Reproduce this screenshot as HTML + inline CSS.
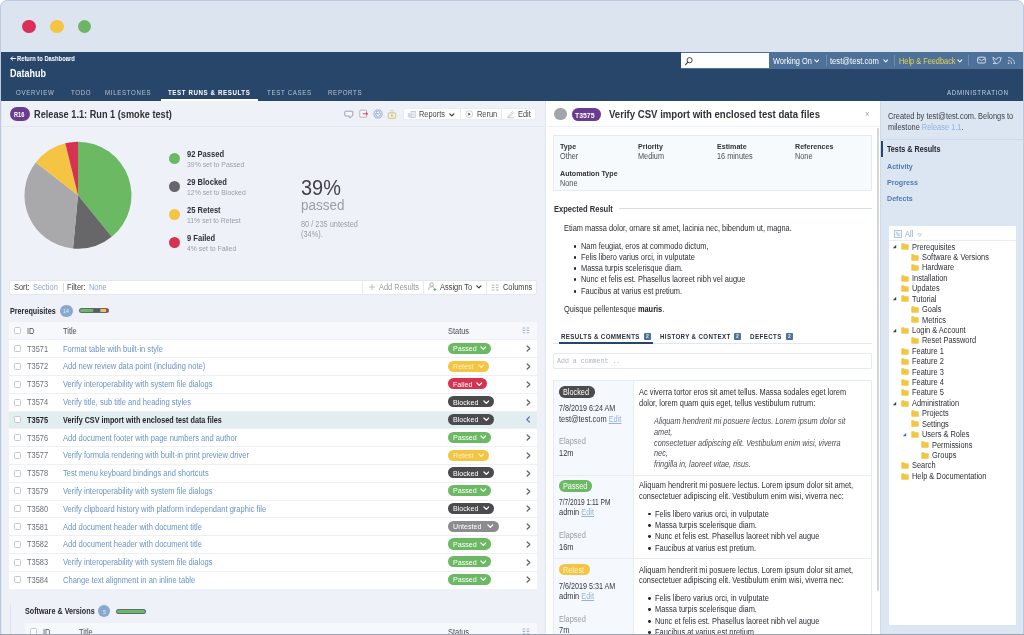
<!DOCTYPE html>
<html lang="en"><head><meta charset="utf-8"><title>Datahub - Test Runs &amp; Results</title>
<style>
html,body{margin:0;padding:0;background:#fff;}
body{width:1024px;height:635px;position:relative;overflow:hidden;will-change:transform;font-family:"Liberation Sans",sans-serif;}
.b{position:absolute;display:block;}
.t{position:absolute;display:block;white-space:nowrap;line-height:1;transform:scaleX(0.88);transform-origin:0 50%;}
</style></head>
<body>
<div class="b" style="left:0.0px;top:0.0px;width:1024.0px;height:635.0px;background:#fff;"></div>
<div class="b" style="left:0.0px;top:0.0px;width:1024.0px;height:640.0px;background:#dce4f0;border:1.4px solid #bdcadd;border-radius:7px 7px 0 0;box-sizing:border-box;"></div>
<div class="b" style="left:22.2px;top:19.6px;width:13.6px;height:13.6px;background:#d9305a;border-radius:50%;"></div>
<div class="b" style="left:50.2px;top:19.6px;width:13.6px;height:13.6px;background:#f5c443;border-radius:50%;"></div>
<div class="b" style="left:77.7px;top:19.6px;width:13.6px;height:13.6px;background:#6db564;border-radius:50%;"></div>
<div class="b" style="left:1.4px;top:52.0px;width:1021.2px;height:49.1px;background:#28466a;"></div>
<div class="b" style="left:680.5px;top:52.0px;width:342.0px;height:17.0px;background:#4d7198;"></div>
<div class="b" style="left:681.0px;top:53.0px;width:87.5px;height:15.0px;background:#fff;"></div>
<svg class="b" style="left:684px;top:55.5px" width="10" height="10" viewBox="0 0 10 10"><circle cx="5.6" cy="4.2" r="2.6" fill="none" stroke="#444" stroke-width="1"/><path d="M3.8 6.2 L1.6 8.6" stroke="#444" stroke-width="1.2" stroke-linecap="round"/></svg>
<svg class="b" style="left:9.6px;top:56.4px" width="6" height="5" viewBox="0 0 6 5"><path d="M5.4 2.5 H1 M2.7 0.7 L0.9 2.5 L2.7 4.3" fill="none" stroke="#fff" stroke-width="1" stroke-linecap="round" stroke-linejoin="round"/></svg>
<span class="t" style="left:17.0px;top:56px;font-size:6.6px;color:#fff;font-weight:700;">Return to Dashboard</span>
<span class="t" style="left:10.0px;top:69px;font-size:10.2px;color:#fff;font-weight:700;">Datahub</span>
<span class="t" style="left:15.7px;top:89px;font-size:7px;color:#b5c3d4;letter-spacing:0.75px;">OVERVIEW</span>
<span class="t" style="left:70.5px;top:89px;font-size:7px;color:#b5c3d4;letter-spacing:0.75px;">TODO</span>
<span class="t" style="left:105.3px;top:89px;font-size:7px;color:#b5c3d4;letter-spacing:0.75px;">MILESTONES</span>
<span class="t" style="left:167.5px;top:89px;font-size:7px;color:#fff;font-weight:700;letter-spacing:0.68px;">TEST RUNS &amp; RESULTS</span>
<span class="t" style="left:267.0px;top:89px;font-size:7px;color:#b5c3d4;letter-spacing:0.75px;">TEST CASES</span>
<span class="t" style="left:327.5px;top:89px;font-size:7px;color:#b5c3d4;letter-spacing:0.75px;">REPORTS</span>
<div class="b" style="left:160.8px;top:99.3px;width:97.2px;height:1.8px;background:#fff;"></div>
<span class="t" style="left:947.0px;top:89px;font-size:7px;color:#c5d1e0;letter-spacing:0.75px;">ADMINISTRATION</span>
<span class="t" style="left:773.0px;top:57px;font-size:8.4px;color:#fff;">Working On</span>
<span class="t" style="left:830.0px;top:57px;font-size:8.4px;color:#fff;transform:scaleX(0.91);">test@test.com</span>
<span class="t" style="left:899.0px;top:57px;font-size:8.4px;color:#e8d44f;">Help &amp; Feedback</span>
<svg class="b" style="left:813.5px;top:59px" width="5.6000000000000005" height="4.0" viewBox="0 0 7 5"><path d="M1 1 L3.5 3.6 L6 1" fill="none" stroke="#fff" stroke-width="1.3" stroke-linecap="round" stroke-linejoin="round"/></svg>
<svg class="b" style="left:882.5px;top:59px" width="5.6000000000000005" height="4.0" viewBox="0 0 7 5"><path d="M1 1 L3.5 3.6 L6 1" fill="none" stroke="#fff" stroke-width="1.3" stroke-linecap="round" stroke-linejoin="round"/></svg>
<svg class="b" style="left:957px;top:59px" width="5.6000000000000005" height="4.0" viewBox="0 0 7 5"><path d="M1 1 L3.5 3.6 L6 1" fill="none" stroke="#fff" stroke-width="1.3" stroke-linecap="round" stroke-linejoin="round"/></svg>
<div class="b" style="left:825.5px;top:55.0px;width:0.8px;height:11.0px;background:#6f8cae;"></div>
<div class="b" style="left:893.5px;top:55.0px;width:0.8px;height:11.0px;background:#6f8cae;"></div>
<div class="b" style="left:967.5px;top:55.0px;width:0.8px;height:11.0px;background:#6f8cae;"></div>
<svg class="b" style="left:977px;top:56px" width="9" height="8" viewBox="0 0 9 8"><rect x="0.6" y="1.2" width="7.8" height="5.8" rx="1.2" fill="none" stroke="#d5deea" stroke-width="1"/><path d="M1 2.6 L4.5 4.6 L8 2.6" fill="none" stroke="#d5deea" stroke-width="0.9"/></svg>
<svg class="b" style="left:991.5px;top:55.5px" width="10" height="9" viewBox="0 0 10 9"><path d="M1 1 C2.5 3 4 3.4 5 3.2 C5 1.4 7.4 0.8 8.2 2 L9.4 1.6 L8.6 2.9 C8.8 6 6 8.4 1 7.4 C2.4 7.2 3.2 6.8 3.6 6.2 C2.4 6 1.6 5 1.6 4.4 C1.2 3.4 1 2 1 1 Z" fill="none" stroke="#d5deea" stroke-width="0.9" stroke-linejoin="round"/></svg>
<svg class="b" style="left:1007px;top:56px" width="9" height="9" viewBox="0 0 9 9"><circle cx="1.6" cy="7.2" r="0.9" fill="#b9c7d9"/><path d="M1 4.2 A3.8 3.8 0 0 1 4.8 8" fill="none" stroke="#b9c7d9" stroke-width="1"/><path d="M1 1.4 A6.6 6.6 0 0 1 7.6 8" fill="none" stroke="#b9c7d9" stroke-width="1"/></svg>
<div class="b" style="left:1.4px;top:101.1px;width:544.0px;height:533.9px;background:#eef1f8;"></div>
<div class="b" style="left:1.4px;top:101.1px;width:1.0px;height:533.9px;background:#dde7f5;"></div>
<div class="b" style="left:2.0px;top:126.0px;width:543.5px;height:1.0px;background:#e3e8f1;"></div>
<div class="b" style="left:10.0px;top:107.0px;width:20.0px;height:14.0px;background:#6b3b8e;border-radius:7px;"></div>
<span class="t" style="left:13.6px;top:112px;font-size:6.4px;color:#fff;font-weight:700;">R16</span>
<span class="t" style="left:34.0px;top:109px;font-size:11px;color:#2f3136;font-weight:700;transform:scaleX(0.835);">Release 1.1: Run 1 (smoke test)</span>
<svg class="b" style="left:0;top:0" width="300" height="300" viewBox="0 0 300 300"><path d="M78 195.3 L78.00 141.80 A53.5 53.5 0 0 1 111.71 236.84 Z" fill="#6cb964"/><path d="M78 195.3 L111.71 236.84 A53.5 53.5 0 0 1 73.00 248.57 Z" fill="#676769"/><path d="M78 195.3 L73.00 248.57 A53.5 53.5 0 0 1 35.79 162.42 Z" fill="#a9a9ab"/><path d="M78 195.3 L35.79 162.42 A53.5 53.5 0 0 1 65.25 143.34 Z" fill="#f4c543"/><path d="M78 195.3 L65.25 143.34 A53.5 53.5 0 0 1 78.00 141.80 Z" fill="#d63352"/></svg>
<div class="b" style="left:169.2px;top:152.8px;width:11.2px;height:11.2px;background:#6cb964;border-radius:50%;"></div>
<span class="t" style="left:186.7px;top:150px;font-size:8.6px;color:#2f3136;font-weight:700;">92 Passed</span>
<span class="t" style="left:186.7px;top:161px;font-size:7.8px;color:#9a9ea6;">39% set to Passed</span>
<div class="b" style="left:169.2px;top:180.8px;width:11.2px;height:11.2px;background:#676769;border-radius:50%;"></div>
<span class="t" style="left:186.7px;top:178px;font-size:8.6px;color:#2f3136;font-weight:700;">29 Blocked</span>
<span class="t" style="left:186.7px;top:189px;font-size:7.8px;color:#9a9ea6;">12% set to Blocked</span>
<div class="b" style="left:169.2px;top:208.8px;width:11.2px;height:11.2px;background:#f4c543;border-radius:50%;"></div>
<span class="t" style="left:186.7px;top:206px;font-size:8.6px;color:#2f3136;font-weight:700;">25 Retest</span>
<span class="t" style="left:186.7px;top:217px;font-size:7.8px;color:#9a9ea6;">11% set to Retest</span>
<div class="b" style="left:169.2px;top:236.8px;width:11.2px;height:11.2px;background:#d63352;border-radius:50%;"></div>
<span class="t" style="left:186.7px;top:234px;font-size:8.6px;color:#2f3136;font-weight:700;">9 Failed</span>
<span class="t" style="left:186.7px;top:245px;font-size:7.8px;color:#9a9ea6;">4% set to Failed</span>
<span class="t" style="left:300.5px;top:177px;font-size:22.5px;color:#404247;transform:scaleX(0.885);">39%</span>
<span class="t" style="left:300.5px;top:197px;font-size:15.5px;color:#9b9ea5;transform:scaleX(0.87);">passed</span>
<span class="t" style="left:300.7px;top:220px;font-size:8.4px;color:#9a9ea6;">80 / 235 untested</span>
<span class="t" style="left:300.7px;top:230px;font-size:8.4px;color:#9a9ea6;">(34%).</span>
<svg class="b" style="left:344px;top:109.6px" width="10" height="10" viewBox="0 0 10 10"><path d="M1.4 1.2 H8.2 Q8.8 1.2 8.8 1.8 V5.4 Q8.8 6 8.2 6 H7.4 L6.2 8.2 L5.2 6 H1.4 Q0.8 6 0.8 5.4 V1.8 Q0.8 1.2 1.4 1.2 Z" fill="#f4f6fa" stroke="#8d9aae" stroke-width="0.9" stroke-linejoin="round"/></svg>
<svg class="b" style="left:358.8px;top:109.3px" width="10" height="10" viewBox="0 0 10 10"><rect x="0.8" y="1.2" width="6.8" height="7" rx="0.6" fill="#fdf5f6" stroke="#a3a6b3" stroke-width="0.8"/><path d="M7.6 1.6 V8" stroke="#e6a9b3" stroke-width="0.8"/><path d="M3.6 4.8 H8.4 M7 3.5 L8.5 4.8 L7 6.1" fill="none" stroke="#d63352" stroke-width="0.9"/></svg>
<svg class="b" style="left:372.5px;top:109px" width="10" height="10" viewBox="0 0 10 10"><circle cx="5" cy="5" r="4.1" fill="#dde7f4" stroke="#8ca3c6" stroke-width="0.8"/><rect x="2.6" y="4.2" width="4.8" height="2.4" rx="0.4" fill="#fff" stroke="#8ca3c6" stroke-width="0.6"/><rect x="3.5" y="2.6" width="3" height="1.6" fill="#fff" stroke="#8ca3c6" stroke-width="0.5"/><rect x="3.6" y="5.9" width="2.8" height="1.6" fill="#fff" stroke="#8ca3c6" stroke-width="0.5"/></svg>
<svg class="b" style="left:387.3px;top:109px" width="10" height="10" viewBox="0 0 10 10"><rect x="1.2" y="3.8" width="7.4" height="5.6" rx="0.7" fill="#f5efd6" stroke="#c4b98d" stroke-width="0.8"/><path d="M3.4 3.8 V2.6 A1.5 1.5 0 0 1 6.4 2.6 V3.8" fill="none" stroke="#cfc7a6" stroke-width="0.8"/><rect x="4.3" y="5.4" width="1.3" height="2.2" fill="#bdb083"/></svg>
<div class="b" style="left:402.8px;top:107.8px;width:133.4px;height:12.2px;background:#fff;border:1px solid #e9edf4;border-radius:2px;box-sizing:border-box;"></div>
<div class="b" style="left:460.2px;top:108.5px;width:0.8px;height:11.5px;background:#e6eaf1;"></div>
<div class="b" style="left:501.0px;top:108.5px;width:0.8px;height:11.5px;background:#e6eaf1;"></div>
<svg class="b" style="left:407px;top:110px" width="9" height="9" viewBox="0 0 9 9"><rect x="0.8" y="3" width="3" height="4.6" fill="#d4dae6"/><rect x="4.2" y="1.4" width="4" height="6.2" fill="none" stroke="#b8c0d0" stroke-width="0.8"/><path d="M5 3 H7.4 M5 4.6 H7.4 M5 6 H7.4" stroke="#b8c0d0" stroke-width="0.6"/></svg>
<span class="t" style="left:418.6px;top:110px;font-size:8.45px;color:#45484f;">Reports</span>
<svg class="b" style="left:449.3px;top:112.6px" width="5.739999999999999" height="4.1" viewBox="0 0 7 5"><path d="M1 1 L3.5 3.6 L6 1" fill="none" stroke="#3a3d44" stroke-width="1.5" stroke-linecap="round" stroke-linejoin="round"/></svg>
<svg class="b" style="left:465px;top:110.2px" width="9" height="9" viewBox="0 0 9 9"><circle cx="4.2" cy="4.2" r="3.5" fill="none" stroke="#c3c8d3" stroke-width="0.8"/><path d="M3.3 2.6 L5.8 4.2 L3.3 5.8 Z" fill="#55585f"/></svg>
<span class="t" style="left:477.0px;top:110px;font-size:8.45px;color:#45484f;">Rerun</span>
<svg class="b" style="left:506px;top:110px" width="9" height="9" viewBox="0 0 9 9"><path d="M1.2 7.8 H8" stroke="#b7bcc8" stroke-width="0.8"/><path d="M2.2 6.4 L6.4 1.6 L7.6 2.6 L3.6 7 L2 7.2 Z" fill="none" stroke="#b7bcc8" stroke-width="0.8"/></svg>
<span class="t" style="left:518.3px;top:110px;font-size:8.45px;color:#45484f;">Edit</span>
<div class="b" style="left:9.0px;top:279.5px;width:527.5px;height:15.0px;background:#fff;border:1px solid #e3e8f0;border-radius:2px;box-sizing:border-box;"></div>
<span class="t" style="left:14.3px;top:283px;font-size:8.45px;color:#3b3e45;">Sort:</span>
<span class="t" style="left:32.8px;top:283px;font-size:8.45px;color:#8aa7c9;">Section</span>
<div class="b" style="left:62.5px;top:282.5px;width:0.8px;height:9.5px;background:#d5dae3;"></div>
<span class="t" style="left:67.3px;top:283px;font-size:8.45px;color:#3b3e45;">Filter:</span>
<span class="t" style="left:89.0px;top:283px;font-size:8.45px;color:#8aa7c9;">None</span>
<div class="b" style="left:362.0px;top:280.5px;width:0.8px;height:13.0px;background:#e6eaf1;"></div>
<div class="b" style="left:423.0px;top:280.5px;width:0.8px;height:13.0px;background:#e6eaf1;"></div>
<div class="b" style="left:486.0px;top:280.5px;width:0.8px;height:13.0px;background:#e6eaf1;"></div>
<svg class="b" style="left:368px;top:283px" width="8" height="8" viewBox="0 0 8 8"><path d="M4 1 V7 M1 4 H7" stroke="#b5bac4" stroke-width="0.9"/></svg>
<span class="t" style="left:379.0px;top:283px;font-size:8.45px;color:#9599a1;">Add Results</span>
<svg class="b" style="left:427.5px;top:282.2px" width="9" height="10" viewBox="0 0 9 10"><circle cx="3.6" cy="2.6" r="1.8" fill="none" stroke="#9aa0ab" stroke-width="0.8"/><path d="M0.8 8 V6.6 A2 2 0 0 1 2.8 4.8 H4.4 A2 2 0 0 1 6 5.6" fill="none" stroke="#9aa0ab" stroke-width="0.8"/><path d="M6.8 6 V9 M5.3 7.5 H8.3" stroke="#5aa35a" stroke-width="0.9"/></svg>
<span class="t" style="left:439.5px;top:283px;font-size:8.45px;color:#3b3e45;">Assign To</span>
<svg class="b" style="left:476px;top:285.4px" width="5.739999999999999" height="4.1" viewBox="0 0 7 5"><path d="M1 1 L3.5 3.6 L6 1" fill="none" stroke="#3a3d44" stroke-width="1.5" stroke-linecap="round" stroke-linejoin="round"/></svg>
<svg class="b" style="left:491px;top:283.5px" width="8" height="8" viewBox="0 0 8 8"><path d="M0.6 1.2 H3.4 M0.6 3.6 H3.4 M0.6 6 H3.4 M4.8 1.2 H7.6 M4.8 3.6 H7.6 M4.8 6 H7.6" stroke="#a9aeb9" stroke-width="0.9"/></svg>
<span class="t" style="left:503.0px;top:283px;font-size:8.45px;color:#3b3e45;">Columns</span>
<span class="t" style="left:9.8px;top:308px;font-size:8.2px;color:#26282d;font-weight:700;">Prerequisites</span>
<div class="b" style="left:59.6px;top:305.0px;width:13.8px;height:12.0px;background:#88a8cd;border-radius:6px;"></div>
<span class="t" style="left:63.3px;top:308px;font-size:6px;color:#e9f0f9;">14</span>
<div class="b" style="left:79.3px;top:307.7px;width:29.7px;height:5.6px;background:#5f6a78;border-radius:3px;"></div>
<div class="b" style="left:80.2px;top:308.7px;width:13.3px;height:3.6px;background:#6cb964;border-radius:2px 0 0 2px;"></div>
<div class="b" style="left:93.5px;top:308.7px;width:6.0px;height:3.6px;background:#5a5c60;"></div>
<div class="b" style="left:99.5px;top:308.7px;width:1.8px;height:3.6px;background:#9b9b9d;"></div>
<div class="b" style="left:101.3px;top:308.7px;width:5.0px;height:3.6px;background:#f4c543;"></div>
<div class="b" style="left:106.3px;top:308.7px;width:1.8px;height:3.6px;background:#d63352;border-radius:0 2px 2px 0;"></div>
<div class="b" style="left:9.0px;top:322.1px;width:527.5px;height:16.6px;background:#f6f8fc;"></div>
<div class="b" style="left:14.0px;top:326.8px;width:7.0px;height:7.0px;background:#fff;border:1px solid #c2c7d0;border-radius:1.5px;box-sizing:border-box;"></div>
<span class="t" style="left:27.0px;top:327px;font-size:8.45px;color:#4a4d55;">ID</span>
<span class="t" style="left:63.3px;top:327px;font-size:8.45px;color:#4a4d55;">Title</span>
<span class="t" style="left:448.0px;top:327px;font-size:8.45px;color:#4a4d55;">Status</span>
<svg class="b" style="left:521.5px;top:326.79999999999995px" width="8" height="7" viewBox="0 0 8 7"><path d="M0.6 1 H3.2 M0.6 3.4 H3.2 M0.6 5.8 H3.2 M4.6 1 H7.2 M4.6 3.4 H7.2 M4.6 5.8 H7.2" stroke="#a6b7d0" stroke-width="1.1"/></svg>
<div class="b" style="left:9.0px;top:339.9px;width:527.5px;height:248.9px;background:#fff;"></div>
<div class="b" style="left:14.0px;top:345.2px;width:7.0px;height:7.0px;background:#fff;border:1px solid #c2c7d0;border-radius:1.5px;box-sizing:border-box;"></div>
<span class="t" style="left:27.0px;top:345px;font-size:8.45px;color:#6b6f77;">T3571</span>
<span class="t" style="left:63.0px;top:345px;font-size:8.45px;color:#6a94c6;transform:scaleX(0.895);">Format table with built-in style</span>
<div class="b" style="left:448.0px;top:342.8px;width:43.0px;height:11.2px;background:#6cb964;border-radius:5.6px;"></div>
<span class="t" style="left:452.5px;top:345px;font-size:8.1px;color:#fff;">Passed</span>
<svg class="b" style="left:479.5px;top:346.18999999999994px" width="6.6499999999999995" height="4.75" viewBox="0 0 7 5"><path d="M1 1 L3.5 3.6 L6 1" fill="none" stroke="#fff" stroke-width="1.3" stroke-linecap="round" stroke-linejoin="round"/></svg>
<svg class="b" style="left:525px;top:345.28999999999996px" width="7" height="7" viewBox="0 0 7 7"><path d="M2.2 1 L4.8 3.5 L2.2 6" fill="none" stroke="#62656d" stroke-width="1.3" stroke-linecap="round" stroke-linejoin="round"/></svg>
<div class="b" style="left:9.0px;top:357.3px;width:527.5px;height:0.8px;background:#edf0f5;"></div>
<div class="b" style="left:14.0px;top:363.0px;width:7.0px;height:7.0px;background:#fff;border:1px solid #c2c7d0;border-radius:1.5px;box-sizing:border-box;"></div>
<span class="t" style="left:27.0px;top:362px;font-size:8.45px;color:#6b6f77;">T3572</span>
<span class="t" style="left:63.0px;top:362px;font-size:8.45px;color:#6a94c6;transform:scaleX(0.895);">Add new review data point (including note)</span>
<div class="b" style="left:448.0px;top:360.6px;width:41.0px;height:11.2px;background:#f4c543;border-radius:5.6px;"></div>
<span class="t" style="left:452.5px;top:363px;font-size:8.1px;color:#fbefc4;">Retest</span>
<svg class="b" style="left:477.5px;top:363.9699999999999px" width="6.6499999999999995" height="4.75" viewBox="0 0 7 5"><path d="M1 1 L3.5 3.6 L6 1" fill="none" stroke="#fbefc4" stroke-width="1.3" stroke-linecap="round" stroke-linejoin="round"/></svg>
<svg class="b" style="left:525px;top:363.06999999999994px" width="7" height="7" viewBox="0 0 7 7"><path d="M2.2 1 L4.8 3.5 L2.2 6" fill="none" stroke="#62656d" stroke-width="1.3" stroke-linecap="round" stroke-linejoin="round"/></svg>
<div class="b" style="left:9.0px;top:375.1px;width:527.5px;height:0.8px;background:#edf0f5;"></div>
<div class="b" style="left:14.0px;top:380.7px;width:7.0px;height:7.0px;background:#fff;border:1px solid #c2c7d0;border-radius:1.5px;box-sizing:border-box;"></div>
<span class="t" style="left:27.0px;top:380px;font-size:8.45px;color:#6b6f77;">T3573</span>
<span class="t" style="left:63.0px;top:380px;font-size:8.45px;color:#6a94c6;transform:scaleX(0.895);">Verify interoperability with system file dialogs</span>
<div class="b" style="left:448.0px;top:378.3px;width:39.0px;height:11.2px;background:#d63352;border-radius:5.6px;"></div>
<span class="t" style="left:452.5px;top:381px;font-size:8.1px;color:#fff;">Failed</span>
<svg class="b" style="left:475.5px;top:381.74999999999994px" width="6.6499999999999995" height="4.75" viewBox="0 0 7 5"><path d="M1 1 L3.5 3.6 L6 1" fill="none" stroke="#fff" stroke-width="1.3" stroke-linecap="round" stroke-linejoin="round"/></svg>
<svg class="b" style="left:525px;top:380.84999999999997px" width="7" height="7" viewBox="0 0 7 7"><path d="M2.2 1 L4.8 3.5 L2.2 6" fill="none" stroke="#62656d" stroke-width="1.3" stroke-linecap="round" stroke-linejoin="round"/></svg>
<div class="b" style="left:9.0px;top:392.8px;width:527.5px;height:0.8px;background:#edf0f5;"></div>
<div class="b" style="left:14.0px;top:398.5px;width:7.0px;height:7.0px;background:#fff;border:1px solid #c2c7d0;border-radius:1.5px;box-sizing:border-box;"></div>
<span class="t" style="left:27.0px;top:398px;font-size:8.45px;color:#6b6f77;">T3574</span>
<span class="t" style="left:63.0px;top:398px;font-size:8.45px;color:#6a94c6;transform:scaleX(0.895);">Verify title, sub title and heading styles</span>
<div class="b" style="left:448.0px;top:396.1px;width:46.0px;height:11.2px;background:#4b4b4d;border-radius:5.6px;"></div>
<span class="t" style="left:452.5px;top:399px;font-size:8.1px;color:#fff;">Blocked</span>
<svg class="b" style="left:482.5px;top:399.53px" width="6.6499999999999995" height="4.75" viewBox="0 0 7 5"><path d="M1 1 L3.5 3.6 L6 1" fill="none" stroke="#fff" stroke-width="1.3" stroke-linecap="round" stroke-linejoin="round"/></svg>
<svg class="b" style="left:525px;top:398.63px" width="7" height="7" viewBox="0 0 7 7"><path d="M2.2 1 L4.8 3.5 L2.2 6" fill="none" stroke="#62656d" stroke-width="1.3" stroke-linecap="round" stroke-linejoin="round"/></svg>
<div class="b" style="left:9.0px;top:411.0px;width:527.5px;height:17.8px;background:#e2edf0;"></div>
<div class="b" style="left:9.0px;top:410.6px;width:527.5px;height:0.8px;background:#edf0f5;"></div>
<div class="b" style="left:14.0px;top:416.3px;width:7.0px;height:7.0px;background:#fff;border:1px solid #c2c7d0;border-radius:1.5px;box-sizing:border-box;"></div>
<span class="t" style="left:27.0px;top:416px;font-size:8.45px;color:#1f2125;font-weight:700;">T3575</span>
<span class="t" style="left:63.0px;top:416px;font-size:8.45px;color:#1f2125;font-weight:700;transform:scaleX(0.855);">Verify CSV import with enclosed test data files</span>
<div class="b" style="left:448.0px;top:413.9px;width:46.0px;height:11.2px;background:#4b4b4d;border-radius:5.6px;"></div>
<span class="t" style="left:452.5px;top:416px;font-size:8.1px;color:#fff;">Blocked</span>
<svg class="b" style="left:482.5px;top:417.30999999999995px" width="6.6499999999999995" height="4.75" viewBox="0 0 7 5"><path d="M1 1 L3.5 3.6 L6 1" fill="none" stroke="#fff" stroke-width="1.3" stroke-linecap="round" stroke-linejoin="round"/></svg>
<svg class="b" style="left:525px;top:416.40999999999997px" width="7" height="7" viewBox="0 0 7 7"><path d="M4.4 1 L1.8 3.5 L4.4 6" fill="none" stroke="#5b80ad" stroke-width="1.3" stroke-linecap="round" stroke-linejoin="round"/></svg>
<div class="b" style="left:9.0px;top:428.4px;width:527.5px;height:0.8px;background:#edf0f5;"></div>
<div class="b" style="left:14.0px;top:434.1px;width:7.0px;height:7.0px;background:#fff;border:1px solid #c2c7d0;border-radius:1.5px;box-sizing:border-box;"></div>
<span class="t" style="left:27.0px;top:434px;font-size:8.45px;color:#6b6f77;">T3576</span>
<span class="t" style="left:63.0px;top:434px;font-size:8.45px;color:#6a94c6;transform:scaleX(0.895);">Add document footer with page numbers and author</span>
<div class="b" style="left:448.0px;top:431.7px;width:43.0px;height:11.2px;background:#6cb964;border-radius:5.6px;"></div>
<span class="t" style="left:452.5px;top:434px;font-size:8.1px;color:#fff;">Passed</span>
<svg class="b" style="left:479.5px;top:435.0899999999999px" width="6.6499999999999995" height="4.75" viewBox="0 0 7 5"><path d="M1 1 L3.5 3.6 L6 1" fill="none" stroke="#fff" stroke-width="1.3" stroke-linecap="round" stroke-linejoin="round"/></svg>
<svg class="b" style="left:525px;top:434.18999999999994px" width="7" height="7" viewBox="0 0 7 7"><path d="M2.2 1 L4.8 3.5 L2.2 6" fill="none" stroke="#62656d" stroke-width="1.3" stroke-linecap="round" stroke-linejoin="round"/></svg>
<div class="b" style="left:9.0px;top:446.2px;width:527.5px;height:0.8px;background:#edf0f5;"></div>
<div class="b" style="left:14.0px;top:451.9px;width:7.0px;height:7.0px;background:#fff;border:1px solid #c2c7d0;border-radius:1.5px;box-sizing:border-box;"></div>
<span class="t" style="left:27.0px;top:451px;font-size:8.45px;color:#6b6f77;">T3577</span>
<span class="t" style="left:63.0px;top:451px;font-size:8.45px;color:#6a94c6;transform:scaleX(0.895);">Verify formula rendering with built-in print preview driver</span>
<div class="b" style="left:448.0px;top:449.5px;width:41.0px;height:11.2px;background:#f4c543;border-radius:5.6px;"></div>
<span class="t" style="left:452.5px;top:452px;font-size:8.1px;color:#fbefc4;">Retest</span>
<svg class="b" style="left:477.5px;top:452.86999999999995px" width="6.6499999999999995" height="4.75" viewBox="0 0 7 5"><path d="M1 1 L3.5 3.6 L6 1" fill="none" stroke="#fbefc4" stroke-width="1.3" stroke-linecap="round" stroke-linejoin="round"/></svg>
<svg class="b" style="left:525px;top:451.96999999999997px" width="7" height="7" viewBox="0 0 7 7"><path d="M2.2 1 L4.8 3.5 L2.2 6" fill="none" stroke="#62656d" stroke-width="1.3" stroke-linecap="round" stroke-linejoin="round"/></svg>
<div class="b" style="left:9.0px;top:464.0px;width:527.5px;height:0.8px;background:#edf0f5;"></div>
<div class="b" style="left:14.0px;top:469.6px;width:7.0px;height:7.0px;background:#fff;border:1px solid #c2c7d0;border-radius:1.5px;box-sizing:border-box;"></div>
<span class="t" style="left:27.0px;top:469px;font-size:8.45px;color:#6b6f77;">T3578</span>
<span class="t" style="left:63.0px;top:469px;font-size:8.45px;color:#6a94c6;transform:scaleX(0.895);">Test menu keyboard bindings and shortcuts</span>
<div class="b" style="left:448.0px;top:467.2px;width:46.0px;height:11.2px;background:#4b4b4d;border-radius:5.6px;"></div>
<span class="t" style="left:452.5px;top:470px;font-size:8.1px;color:#fff;">Blocked</span>
<svg class="b" style="left:482.5px;top:470.65px" width="6.6499999999999995" height="4.75" viewBox="0 0 7 5"><path d="M1 1 L3.5 3.6 L6 1" fill="none" stroke="#fff" stroke-width="1.3" stroke-linecap="round" stroke-linejoin="round"/></svg>
<svg class="b" style="left:525px;top:469.75px" width="7" height="7" viewBox="0 0 7 7"><path d="M2.2 1 L4.8 3.5 L2.2 6" fill="none" stroke="#62656d" stroke-width="1.3" stroke-linecap="round" stroke-linejoin="round"/></svg>
<div class="b" style="left:9.0px;top:481.7px;width:527.5px;height:0.8px;background:#edf0f5;"></div>
<div class="b" style="left:14.0px;top:487.4px;width:7.0px;height:7.0px;background:#fff;border:1px solid #c2c7d0;border-radius:1.5px;box-sizing:border-box;"></div>
<span class="t" style="left:27.0px;top:487px;font-size:8.45px;color:#6b6f77;">T3579</span>
<span class="t" style="left:63.0px;top:487px;font-size:8.45px;color:#6a94c6;transform:scaleX(0.895);">Verify interoperability with system file dialogs</span>
<div class="b" style="left:448.0px;top:485.0px;width:43.0px;height:11.2px;background:#6cb964;border-radius:5.6px;"></div>
<span class="t" style="left:452.5px;top:487px;font-size:8.1px;color:#fff;">Passed</span>
<svg class="b" style="left:479.5px;top:488.42999999999995px" width="6.6499999999999995" height="4.75" viewBox="0 0 7 5"><path d="M1 1 L3.5 3.6 L6 1" fill="none" stroke="#fff" stroke-width="1.3" stroke-linecap="round" stroke-linejoin="round"/></svg>
<svg class="b" style="left:525px;top:487.53px" width="7" height="7" viewBox="0 0 7 7"><path d="M2.2 1 L4.8 3.5 L2.2 6" fill="none" stroke="#62656d" stroke-width="1.3" stroke-linecap="round" stroke-linejoin="round"/></svg>
<div class="b" style="left:9.0px;top:499.5px;width:527.5px;height:0.8px;background:#edf0f5;"></div>
<div class="b" style="left:14.0px;top:505.2px;width:7.0px;height:7.0px;background:#fff;border:1px solid #c2c7d0;border-radius:1.5px;box-sizing:border-box;"></div>
<span class="t" style="left:27.0px;top:505px;font-size:8.45px;color:#6b6f77;">T3580</span>
<span class="t" style="left:63.0px;top:505px;font-size:8.45px;color:#6a94c6;transform:scaleX(0.895);">Verify clipboard history with platform independant graphic file</span>
<div class="b" style="left:448.0px;top:502.8px;width:46.0px;height:11.2px;background:#4b4b4d;border-radius:5.6px;"></div>
<span class="t" style="left:452.5px;top:505px;font-size:8.1px;color:#fff;">Blocked</span>
<svg class="b" style="left:482.5px;top:506.2099999999999px" width="6.6499999999999995" height="4.75" viewBox="0 0 7 5"><path d="M1 1 L3.5 3.6 L6 1" fill="none" stroke="#fff" stroke-width="1.3" stroke-linecap="round" stroke-linejoin="round"/></svg>
<svg class="b" style="left:525px;top:505.30999999999995px" width="7" height="7" viewBox="0 0 7 7"><path d="M2.2 1 L4.8 3.5 L2.2 6" fill="none" stroke="#62656d" stroke-width="1.3" stroke-linecap="round" stroke-linejoin="round"/></svg>
<div class="b" style="left:9.0px;top:517.3px;width:527.5px;height:0.8px;background:#edf0f5;"></div>
<div class="b" style="left:14.0px;top:523.0px;width:7.0px;height:7.0px;background:#fff;border:1px solid #c2c7d0;border-radius:1.5px;box-sizing:border-box;"></div>
<span class="t" style="left:27.0px;top:523px;font-size:8.45px;color:#6b6f77;">T3581</span>
<span class="t" style="left:63.0px;top:523px;font-size:8.45px;color:#6a94c6;transform:scaleX(0.895);">Add document header with document title</span>
<div class="b" style="left:448.0px;top:520.6px;width:50.5px;height:11.2px;background:#8c8c8e;border-radius:5.6px;"></div>
<span class="t" style="left:452.5px;top:523px;font-size:8.1px;color:#fff;">Untested</span>
<svg class="b" style="left:487.0px;top:523.99px" width="6.6499999999999995" height="4.75" viewBox="0 0 7 5"><path d="M1 1 L3.5 3.6 L6 1" fill="none" stroke="#fff" stroke-width="1.3" stroke-linecap="round" stroke-linejoin="round"/></svg>
<svg class="b" style="left:525px;top:523.09px" width="7" height="7" viewBox="0 0 7 7"><path d="M2.2 1 L4.8 3.5 L2.2 6" fill="none" stroke="#62656d" stroke-width="1.3" stroke-linecap="round" stroke-linejoin="round"/></svg>
<div class="b" style="left:9.0px;top:535.1px;width:527.5px;height:0.8px;background:#edf0f5;"></div>
<div class="b" style="left:14.0px;top:540.8px;width:7.0px;height:7.0px;background:#fff;border:1px solid #c2c7d0;border-radius:1.5px;box-sizing:border-box;"></div>
<span class="t" style="left:27.0px;top:540px;font-size:8.45px;color:#6b6f77;">T3582</span>
<span class="t" style="left:63.0px;top:540px;font-size:8.45px;color:#6a94c6;transform:scaleX(0.895);">Add document header with document title</span>
<div class="b" style="left:448.0px;top:538.4px;width:43.0px;height:11.2px;background:#6cb964;border-radius:5.6px;"></div>
<span class="t" style="left:452.5px;top:541px;font-size:8.1px;color:#fff;">Passed</span>
<svg class="b" style="left:479.5px;top:541.77px" width="6.6499999999999995" height="4.75" viewBox="0 0 7 5"><path d="M1 1 L3.5 3.6 L6 1" fill="none" stroke="#fff" stroke-width="1.3" stroke-linecap="round" stroke-linejoin="round"/></svg>
<svg class="b" style="left:525px;top:540.87px" width="7" height="7" viewBox="0 0 7 7"><path d="M2.2 1 L4.8 3.5 L2.2 6" fill="none" stroke="#62656d" stroke-width="1.3" stroke-linecap="round" stroke-linejoin="round"/></svg>
<div class="b" style="left:9.0px;top:552.9px;width:527.5px;height:0.8px;background:#edf0f5;"></div>
<div class="b" style="left:14.0px;top:558.5px;width:7.0px;height:7.0px;background:#fff;border:1px solid #c2c7d0;border-radius:1.5px;box-sizing:border-box;"></div>
<span class="t" style="left:27.0px;top:558px;font-size:8.45px;color:#6b6f77;">T3583</span>
<span class="t" style="left:63.0px;top:558px;font-size:8.45px;color:#6a94c6;transform:scaleX(0.895);">Verify interoperability with system file dialogs</span>
<div class="b" style="left:448.0px;top:556.1px;width:43.0px;height:11.2px;background:#6cb964;border-radius:5.6px;"></div>
<span class="t" style="left:452.5px;top:559px;font-size:8.1px;color:#fff;">Passed</span>
<svg class="b" style="left:479.5px;top:559.55px" width="6.6499999999999995" height="4.75" viewBox="0 0 7 5"><path d="M1 1 L3.5 3.6 L6 1" fill="none" stroke="#fff" stroke-width="1.3" stroke-linecap="round" stroke-linejoin="round"/></svg>
<svg class="b" style="left:525px;top:558.65px" width="7" height="7" viewBox="0 0 7 7"><path d="M2.2 1 L4.8 3.5 L2.2 6" fill="none" stroke="#62656d" stroke-width="1.3" stroke-linecap="round" stroke-linejoin="round"/></svg>
<div class="b" style="left:9.0px;top:570.6px;width:527.5px;height:0.8px;background:#edf0f5;"></div>
<div class="b" style="left:14.0px;top:576.3px;width:7.0px;height:7.0px;background:#fff;border:1px solid #c2c7d0;border-radius:1.5px;box-sizing:border-box;"></div>
<span class="t" style="left:27.0px;top:576px;font-size:8.45px;color:#6b6f77;">T3584</span>
<span class="t" style="left:63.0px;top:576px;font-size:8.45px;color:#6a94c6;transform:scaleX(0.895);">Change text alignment in an inline table</span>
<div class="b" style="left:448.0px;top:573.9px;width:43.0px;height:11.2px;background:#6cb964;border-radius:5.6px;"></div>
<span class="t" style="left:452.5px;top:576px;font-size:8.1px;color:#fff;">Passed</span>
<svg class="b" style="left:479.5px;top:577.3299999999999px" width="6.6499999999999995" height="4.75" viewBox="0 0 7 5"><path d="M1 1 L3.5 3.6 L6 1" fill="none" stroke="#fff" stroke-width="1.3" stroke-linecap="round" stroke-linejoin="round"/></svg>
<svg class="b" style="left:525px;top:576.43px" width="7" height="7" viewBox="0 0 7 7"><path d="M2.2 1 L4.8 3.5 L2.2 6" fill="none" stroke="#62656d" stroke-width="1.3" stroke-linecap="round" stroke-linejoin="round"/></svg>
<div class="b" style="left:9.6px;top:604.0px;width:0.8px;height:31.0px;background:#dfe5ef;"></div>
<span class="t" style="left:25.0px;top:608px;font-size:8.2px;color:#26282d;font-weight:700;">Software &amp; Versions</span>
<div class="b" style="left:98.2px;top:605.3px;width:12.2px;height:12.0px;background:#88a8cd;border-radius:6px;"></div>
<span class="t" style="left:102.6px;top:609px;font-size:6px;color:#e9f0f9;">5</span>
<div class="b" style="left:116.0px;top:608.6px;width:30.0px;height:5.6px;background:#5f6a78;border-radius:3px;"></div>
<div class="b" style="left:117.0px;top:609.6px;width:28.0px;height:3.6px;background:#6cb964;border-radius:2px;"></div>
<div class="b" style="left:25.0px;top:623.2px;width:511.5px;height:16.6px;background:#f6f8fc;"></div>
<div class="b" style="left:30.0px;top:627.9px;width:7.0px;height:7.0px;background:#fff;border:1px solid #c2c7d0;border-radius:1.5px;box-sizing:border-box;"></div>
<span class="t" style="left:43.0px;top:628px;font-size:8.45px;color:#4a4d55;">ID</span>
<span class="t" style="left:79.3px;top:628px;font-size:8.45px;color:#4a4d55;">Title</span>
<span class="t" style="left:448.0px;top:628px;font-size:8.45px;color:#4a4d55;">Status</span>
<svg class="b" style="left:521.5px;top:627.9px" width="8" height="7" viewBox="0 0 8 7"><path d="M0.6 1 H3.2 M0.6 3.4 H3.2 M0.6 5.8 H3.2 M4.6 1 H7.2 M4.6 3.4 H7.2 M4.6 5.8 H7.2" stroke="#a6b7d0" stroke-width="1.1"/></svg>
<div class="b" style="left:545.5px;top:101.1px;width:335.0px;height:533.9px;background:#fff;"></div>
<div class="b" style="left:545.3px;top:101.2px;width:0.9px;height:533.8px;background:#e1e7f0;"></div>
<div class="b" style="left:546.5px;top:126.0px;width:333.0px;height:1.0px;background:#eef1f6;"></div>
<div class="b" style="left:554.2px;top:107.8px;width:12.5px;height:12.5px;background:#a2a4a8;border-radius:50%;"></div>
<div class="b" style="left:572.0px;top:108.3px;width:28.6px;height:12.7px;background:#6b3b8e;border-radius:6.4px;"></div>
<span class="t" style="left:575.3px;top:112px;font-size:8px;color:#fff;font-weight:700;transform:scaleX(0.86);">T3575</span>
<span class="t" style="left:608.6px;top:109px;font-size:11.2px;color:#2f3136;font-weight:700;transform:scaleX(0.857);">Verify CSV import with enclosed test data files</span>
<span class="t" style="left:864.5px;top:110px;font-size:9px;color:#9da1a9;">×</span>
<div class="b" style="left:876.7px;top:128.0px;width:2.6px;height:463.0px;background:#d3d6dc;border-radius:1.3px;"></div>
<div class="b" style="left:553.2px;top:134.8px;width:319.0px;height:56.5px;background:#f7fafd;border:1px solid #e4ebf4;box-sizing:border-box;"></div>
<span class="t" style="left:559.7px;top:143px;font-size:8.1px;color:#2f3136;font-weight:700;">Type</span>
<span class="t" style="left:559.7px;top:152px;font-size:8.3px;color:#4b4e55;">Other</span>
<span class="t" style="left:638.4px;top:143px;font-size:8.1px;color:#2f3136;font-weight:700;">Priority</span>
<span class="t" style="left:638.4px;top:152px;font-size:8.3px;color:#4b4e55;">Medium</span>
<span class="t" style="left:716.7px;top:143px;font-size:8.1px;color:#2f3136;font-weight:700;">Estimate</span>
<span class="t" style="left:716.7px;top:152px;font-size:8.3px;color:#4b4e55;">16 minutes</span>
<span class="t" style="left:795.4px;top:143px;font-size:8.1px;color:#2f3136;font-weight:700;">References</span>
<span class="t" style="left:795.4px;top:152px;font-size:8.3px;color:#4b4e55;">None</span>
<span class="t" style="left:559.7px;top:170px;font-size:8.1px;color:#2f3136;font-weight:700;">Automation Type</span>
<span class="t" style="left:559.7px;top:179px;font-size:8.3px;color:#4b4e55;">None</span>
<span class="t" style="left:553.5px;top:205px;font-size:8.6px;color:#2f3136;font-weight:700;">Expected Result</span>
<div class="b" style="left:619.0px;top:208.3px;width:253.0px;height:0.8px;background:#d4dce8;"></div>
<span class="t" style="left:564.3px;top:224px;font-size:8.45px;color:#2d2f34;">Etiam massa dolor, ornare sit amet, lacinia nec, bibendum ut, magna.</span>
<div class="b" style="left:573.6px;top:244.7px;width:2.9px;height:2.9px;background:#222;border-radius:50%;"></div>
<span class="t" style="left:580.5px;top:242px;font-size:8.45px;color:#2d2f34;">Nam feugiat, eros at commodo dictum,</span>
<div class="b" style="left:573.6px;top:255.9px;width:2.9px;height:2.9px;background:#222;border-radius:50%;"></div>
<span class="t" style="left:580.5px;top:253px;font-size:8.45px;color:#2d2f34;">Felis libero varius orci, in vulputate</span>
<div class="b" style="left:573.6px;top:267.1px;width:2.9px;height:2.9px;background:#222;border-radius:50%;"></div>
<span class="t" style="left:580.5px;top:264px;font-size:8.45px;color:#2d2f34;">Massa turpis scelerisque diam.</span>
<div class="b" style="left:573.6px;top:278.4px;width:2.9px;height:2.9px;background:#222;border-radius:50%;"></div>
<span class="t" style="left:580.5px;top:275px;font-size:8.45px;color:#2d2f34;">Nunc et felis est. Phasellus laoreet nibh vel augue</span>
<div class="b" style="left:573.6px;top:289.7px;width:2.9px;height:2.9px;background:#222;border-radius:50%;"></div>
<span class="t" style="left:580.5px;top:287px;font-size:8.45px;color:#2d2f34;">Faucibus at varius est pretium.</span>
<span class="t" style="left:564.3px;top:305px;font-size:8.45px;color:#2d2f34;">Quisque pellentesque <b style="color:#222">mauris</b>.</span>
<span class="t" style="left:560.8px;top:333px;font-size:7px;color:#27303d;font-weight:700;letter-spacing:0.42px;">RESULTS &amp; COMMENTS</span>
<div class="b" style="left:643.8px;top:332.5px;width:7.0px;height:7.0px;background:#4d7198;border-radius:1px;"></div>
<span class="t" style="left:645.7px;top:334px;font-size:5.8px;color:#dfe8f3;font-weight:700;">2</span>
<span class="t" style="left:659.5px;top:333px;font-size:7px;color:#27303d;font-weight:700;letter-spacing:0.42px;">HISTORY &amp; CONTEXT</span>
<div class="b" style="left:734.0px;top:332.5px;width:7.0px;height:7.0px;background:#4d7198;border-radius:1px;"></div>
<span class="t" style="left:735.9px;top:334px;font-size:5.8px;color:#dfe8f3;font-weight:700;">2</span>
<span class="t" style="left:749.6px;top:333px;font-size:7px;color:#27303d;font-weight:700;letter-spacing:0.5px;">DEFECTS</span>
<div class="b" style="left:786.0px;top:332.5px;width:7.0px;height:7.0px;background:#4d7198;border-radius:1px;"></div>
<span class="t" style="left:787.9px;top:334px;font-size:5.8px;color:#dfe8f3;font-weight:700;">2</span>
<div class="b" style="left:553.0px;top:343.3px;width:319.0px;height:0.8px;background:#e3e8f0;"></div>
<div class="b" style="left:559.0px;top:342.3px;width:93.6px;height:1.6px;background:#28466a;"></div>
<div class="b" style="left:553.0px;top:353.3px;width:319.0px;height:15.7px;background:#fff;border:1px solid #e6eaf0;border-radius:1px;box-sizing:border-box;"></div>
<span class="t" style="left:557.0px;top:359px;font-size:6.6px;color:#b0b4bc;transform:scaleX(1);font-family:'Liberation Mono','DejaVu Sans Mono',monospace;">Add a comment ..</span>
<div class="b" style="left:553.0px;top:380.3px;width:319.0px;height:260.0px;background:#fff;border:1px solid #e5ebf3;box-sizing:border-box;"></div>
<div class="b" style="left:554.0px;top:381.3px;width:78.5px;height:254.0px;background:#f5f9fd;"></div>
<div class="b" style="left:632.5px;top:381.3px;width:0.8px;height:254.0px;background:#e8edf4;"></div>
<div class="b" style="left:554.0px;top:474.6px;width:317.0px;height:0.8px;background:#e8edf4;"></div>
<div class="b" style="left:554.0px;top:558.2px;width:317.0px;height:0.8px;background:#e8edf4;"></div>
<div class="b" style="left:559.0px;top:386.3px;width:35.7px;height:11.4px;background:#4b4b4d;border-radius:5.7px;"></div>
<span class="t" style="left:562.6px;top:388px;font-size:8.3px;color:#fff;">Blocked</span>
<span class="t" style="left:558.8px;top:404px;font-size:8.45px;color:#34363b;transform:scaleX(0.85);">7/8/2019 6:24 AM</span>
<span class="t" style="left:558.8px;top:415px;font-size:8.45px;color:#34363b;">test@test.com <span style="color:#94b3d8;text-decoration:underline">Edit</span></span>
<span class="t" style="left:558.8px;top:437px;font-size:8.45px;color:#9a9ea6;">Elapsed</span>
<span class="t" style="left:558.8px;top:449px;font-size:8.45px;color:#34363b;">12m</span>
<div class="b" style="left:559.0px;top:480.2px;width:33.0px;height:11.4px;background:#6cb964;border-radius:5.7px;"></div>
<span class="t" style="left:562.6px;top:482px;font-size:8.3px;color:#fff;">Passed</span>
<span class="t" style="left:558.8px;top:498px;font-size:8.45px;color:#34363b;transform:scaleX(0.78);">7/7/2019 1:11 PM</span>
<span class="t" style="left:558.8px;top:508px;font-size:8.45px;color:#34363b;">admin <span style="color:#94b3d8;text-decoration:underline">Edit</span></span>
<span class="t" style="left:558.8px;top:531px;font-size:8.45px;color:#9a9ea6;">Elapsed</span>
<span class="t" style="left:558.8px;top:543px;font-size:8.45px;color:#34363b;">16m</span>
<div class="b" style="left:559.0px;top:564.0px;width:31.0px;height:11.4px;background:#f4c543;border-radius:5.7px;"></div>
<span class="t" style="left:562.6px;top:566px;font-size:8.3px;color:#fbefc4;">Retest</span>
<span class="t" style="left:558.8px;top:582px;font-size:8.45px;color:#34363b;transform:scaleX(0.85);">7/6/2019 5:31 AM</span>
<span class="t" style="left:558.8px;top:592px;font-size:8.45px;color:#34363b;">admin <span style="color:#94b3d8;text-decoration:underline">Edit</span></span>
<span class="t" style="left:558.8px;top:615px;font-size:8.45px;color:#9a9ea6;">Elapsed</span>
<span class="t" style="left:558.8px;top:626px;font-size:8.45px;color:#34363b;">7m</span>
<span class="t" style="left:638.8px;top:388px;font-size:8.45px;color:#2d2f34;">Ac viverra tortor eros sit amet tellus. Massa sodales eget lorem</span>
<span class="t" style="left:638.8px;top:399px;font-size:8.45px;color:#2d2f34;">dolor, lorem quam quis eget, tellus vestibulum rutrum:</span>
<span class="t" style="left:654.3px;top:417px;font-size:8.35px;color:#4a4c52;font-style:italic;">Aliquam hendrerit mi posuere lectus. Lorem ipsum dolor sit</span>
<span class="t" style="left:654.3px;top:428px;font-size:8.35px;color:#4a4c52;font-style:italic;">amet,</span>
<span class="t" style="left:654.3px;top:439px;font-size:8.35px;color:#4a4c52;font-style:italic;">consectetuer adipiscing elit. Vestibulum enim wisi, viverra</span>
<span class="t" style="left:654.3px;top:449px;font-size:8.35px;color:#4a4c52;font-style:italic;">nec,</span>
<span class="t" style="left:654.3px;top:460px;font-size:8.35px;color:#4a4c52;font-style:italic;">fringilla in, laoreet vitae, risus.</span>
<span class="t" style="left:638.8px;top:481px;font-size:8.45px;color:#2d2f34;">Aliquam hendrerit mi posuere lectus. Lorem ipsum dolor sit amet,</span>
<span class="t" style="left:638.8px;top:492px;font-size:8.45px;color:#2d2f34;">consectetuer adipiscing elit. Vestibulum enim wisi, viverra nec:</span>
<div class="b" style="left:647.9px;top:512.6px;width:2.9px;height:2.9px;background:#222;border-radius:50%;"></div>
<span class="t" style="left:655.0px;top:510px;font-size:8.45px;color:#2d2f34;">Felis libero varius orci, in vulputate</span>
<div class="b" style="left:647.9px;top:524.0px;width:2.9px;height:2.9px;background:#222;border-radius:50%;"></div>
<span class="t" style="left:655.0px;top:521px;font-size:8.45px;color:#2d2f34;">Massa turpis scelerisque diam.</span>
<div class="b" style="left:647.9px;top:535.4px;width:2.9px;height:2.9px;background:#222;border-radius:50%;"></div>
<span class="t" style="left:655.0px;top:532px;font-size:8.45px;color:#2d2f34;">Nunc et felis est. Phasellus laoreet nibh vel augue</span>
<div class="b" style="left:647.9px;top:546.8px;width:2.9px;height:2.9px;background:#222;border-radius:50%;"></div>
<span class="t" style="left:655.0px;top:544px;font-size:8.45px;color:#2d2f34;">Faucibus at varius est pretium.</span>
<span class="t" style="left:638.8px;top:566px;font-size:8.45px;color:#2d2f34;">Aliquam hendrerit mi posuere lectus. Lorem ipsum dolor sit amet,</span>
<span class="t" style="left:638.8px;top:576px;font-size:8.45px;color:#2d2f34;">consectetuer adipiscing elit. Vestibulum enim wisi, viverra nec:</span>
<div class="b" style="left:647.9px;top:596.9px;width:2.9px;height:2.9px;background:#222;border-radius:50%;"></div>
<span class="t" style="left:655.0px;top:594px;font-size:8.45px;color:#2d2f34;">Felis libero varius orci, in vulputate</span>
<div class="b" style="left:647.9px;top:608.3px;width:2.9px;height:2.9px;background:#222;border-radius:50%;"></div>
<span class="t" style="left:655.0px;top:605px;font-size:8.45px;color:#2d2f34;">Massa turpis scelerisque diam.</span>
<div class="b" style="left:647.9px;top:619.7px;width:2.9px;height:2.9px;background:#222;border-radius:50%;"></div>
<span class="t" style="left:655.0px;top:617px;font-size:8.45px;color:#2d2f34;">Nunc et felis est. Phasellus laoreet nibh vel augue</span>
<div class="b" style="left:647.9px;top:631.1px;width:2.9px;height:2.9px;background:#222;border-radius:50%;"></div>
<span class="t" style="left:655.0px;top:628px;font-size:8.45px;color:#2d2f34;">Faucibus at varius est pretium.</span>
<div class="b" style="left:880.3px;top:101.1px;width:142.3px;height:533.9px;background:#dbe6f2;"></div>
<div class="b" style="left:880.3px;top:101.5px;width:0.8px;height:533.5px;background:#cfdae8;"></div>
<span class="t" style="left:888.4px;top:112px;font-size:8.45px;color:#3d4047;">Created by test@test.com. Belongs to</span>
<span class="t" style="left:888.4px;top:123px;font-size:8.45px;color:#3d4047;">milestone <span style="color:#8fb4dc">Release 1.1</span>.</span>
<div class="b" style="left:881.0px;top:139.3px;width:141.5px;height:0.8px;background:#cdd9e8;"></div>
<div class="b" style="left:881.0px;top:141.0px;width:1.6px;height:15.8px;background:#28466a;"></div>
<span class="t" style="left:887.3px;top:146px;font-size:8.2px;color:#23252a;font-weight:700;">Tests &amp; Results</span>
<span class="t" style="left:886.5px;top:163px;font-size:8.1px;color:#4f7bb0;font-weight:700;">Activity</span>
<span class="t" style="left:886.5px;top:179px;font-size:8.1px;color:#4f7bb0;font-weight:700;">Progress</span>
<span class="t" style="left:886.5px;top:195px;font-size:8.1px;color:#4f7bb0;font-weight:700;">Defects</span>
<div class="b" style="left:889.4px;top:225.8px;width:126.4px;height:399.0px;background:#fff;"></div>
<div class="b" style="left:889.4px;top:240.0px;width:126.4px;height:0.8px;background:#e9edf3;"></div>
<svg class="b" style="left:893.5px;top:230px" width="8" height="8" viewBox="0 0 8 8"><rect x="0.6" y="0.6" width="6.8" height="6.8" fill="#f3f6fa" stroke="#9fb7d4" stroke-width="0.8"/><path d="M2 2.4 H4 M2 4 H6 M4 4 V5.6 H6" stroke="#9fb7d4" stroke-width="0.7" fill="none"/></svg>
<span class="t" style="left:904.5px;top:230px;font-size:8.45px;color:#8aa7c9;">All</span>
<svg class="b" style="left:917px;top:232.5px" width="6" height="5" viewBox="0 0 6 5"><path d="M0.8 0.8 H4.8 L2.8 3.6 Z" fill="none" stroke="#b5c4d8" stroke-width="0.7"/></svg>
<svg class="b" style="left:900.5px;top:243.3px" width="8" height="7" viewBox="0 0 8 7"><path d="M0.3 0.9 Q0.3 0.3 0.9 0.3 H3 L3.8 1.2 H7.1 Q7.7 1.2 7.7 1.8 V6.1 Q7.7 6.7 7.1 6.7 H0.9 Q0.3 6.7 0.3 6.1 Z" fill="#f2c644"/></svg>
<svg class="b" style="left:892.3px;top:244.3px" width="5" height="5" viewBox="0 0 5 5"><path d="M4.2 0.8 V4.2 H0.8 Z" fill="#3d4249"/></svg>
<span class="t" style="left:912.3px;top:243px;font-size:8.45px;color:#2e3035;">Prerequisites</span>
<svg class="b" style="left:910.5px;top:253.7px" width="8" height="7" viewBox="0 0 8 7"><path d="M0.3 0.9 Q0.3 0.3 0.9 0.3 H3 L3.8 1.2 H7.1 Q7.7 1.2 7.7 1.8 V6.1 Q7.7 6.7 7.1 6.7 H0.9 Q0.3 6.7 0.3 6.1 Z" fill="#f2c644"/></svg>
<span class="t" style="left:922.3px;top:253px;font-size:8.45px;color:#2e3035;">Software &amp; Versions</span>
<svg class="b" style="left:910.5px;top:264.1px" width="8" height="7" viewBox="0 0 8 7"><path d="M0.3 0.9 Q0.3 0.3 0.9 0.3 H3 L3.8 1.2 H7.1 Q7.7 1.2 7.7 1.8 V6.1 Q7.7 6.7 7.1 6.7 H0.9 Q0.3 6.7 0.3 6.1 Z" fill="#f2c644"/></svg>
<span class="t" style="left:922.3px;top:263px;font-size:8.45px;color:#2e3035;">Hardware</span>
<svg class="b" style="left:900.5px;top:274.6px" width="8" height="7" viewBox="0 0 8 7"><path d="M0.3 0.9 Q0.3 0.3 0.9 0.3 H3 L3.8 1.2 H7.1 Q7.7 1.2 7.7 1.8 V6.1 Q7.7 6.7 7.1 6.7 H0.9 Q0.3 6.7 0.3 6.1 Z" fill="#f2c644"/></svg>
<span class="t" style="left:912.3px;top:274px;font-size:8.45px;color:#2e3035;">Installation</span>
<svg class="b" style="left:900.5px;top:285.0px" width="8" height="7" viewBox="0 0 8 7"><path d="M0.3 0.9 Q0.3 0.3 0.9 0.3 H3 L3.8 1.2 H7.1 Q7.7 1.2 7.7 1.8 V6.1 Q7.7 6.7 7.1 6.7 H0.9 Q0.3 6.7 0.3 6.1 Z" fill="#f2c644"/></svg>
<span class="t" style="left:912.3px;top:284px;font-size:8.45px;color:#2e3035;">Updates</span>
<svg class="b" style="left:900.5px;top:295.4px" width="8" height="7" viewBox="0 0 8 7"><path d="M0.3 0.9 Q0.3 0.3 0.9 0.3 H3 L3.8 1.2 H7.1 Q7.7 1.2 7.7 1.8 V6.1 Q7.7 6.7 7.1 6.7 H0.9 Q0.3 6.7 0.3 6.1 Z" fill="#f2c644"/></svg>
<svg class="b" style="left:892.3px;top:296.4px" width="5" height="5" viewBox="0 0 5 5"><path d="M4.2 0.8 V4.2 H0.8 Z" fill="#3d4249"/></svg>
<span class="t" style="left:912.3px;top:295px;font-size:8.45px;color:#2e3035;">Tutorial</span>
<svg class="b" style="left:910.5px;top:305.8px" width="8" height="7" viewBox="0 0 8 7"><path d="M0.3 0.9 Q0.3 0.3 0.9 0.3 H3 L3.8 1.2 H7.1 Q7.7 1.2 7.7 1.8 V6.1 Q7.7 6.7 7.1 6.7 H0.9 Q0.3 6.7 0.3 6.1 Z" fill="#f2c644"/></svg>
<span class="t" style="left:922.3px;top:305px;font-size:8.45px;color:#2e3035;">Goals</span>
<svg class="b" style="left:910.5px;top:316.2px" width="8" height="7" viewBox="0 0 8 7"><path d="M0.3 0.9 Q0.3 0.3 0.9 0.3 H3 L3.8 1.2 H7.1 Q7.7 1.2 7.7 1.8 V6.1 Q7.7 6.7 7.1 6.7 H0.9 Q0.3 6.7 0.3 6.1 Z" fill="#f2c644"/></svg>
<span class="t" style="left:922.3px;top:316px;font-size:8.45px;color:#2e3035;">Metrics</span>
<svg class="b" style="left:900.5px;top:326.7px" width="8" height="7" viewBox="0 0 8 7"><path d="M0.3 0.9 Q0.3 0.3 0.9 0.3 H3 L3.8 1.2 H7.1 Q7.7 1.2 7.7 1.8 V6.1 Q7.7 6.7 7.1 6.7 H0.9 Q0.3 6.7 0.3 6.1 Z" fill="#f2c644"/></svg>
<svg class="b" style="left:892.3px;top:327.7px" width="5" height="5" viewBox="0 0 5 5"><path d="M4.2 0.8 V4.2 H0.8 Z" fill="#3d4249"/></svg>
<span class="t" style="left:912.3px;top:326px;font-size:8.45px;color:#2e3035;">Login &amp; Account</span>
<svg class="b" style="left:910.5px;top:337.1px" width="8" height="7" viewBox="0 0 8 7"><path d="M0.3 0.9 Q0.3 0.3 0.9 0.3 H3 L3.8 1.2 H7.1 Q7.7 1.2 7.7 1.8 V6.1 Q7.7 6.7 7.1 6.7 H0.9 Q0.3 6.7 0.3 6.1 Z" fill="#f2c644"/></svg>
<span class="t" style="left:922.3px;top:336px;font-size:8.45px;color:#2e3035;">Reset Password</span>
<svg class="b" style="left:900.5px;top:347.5px" width="8" height="7" viewBox="0 0 8 7"><path d="M0.3 0.9 Q0.3 0.3 0.9 0.3 H3 L3.8 1.2 H7.1 Q7.7 1.2 7.7 1.8 V6.1 Q7.7 6.7 7.1 6.7 H0.9 Q0.3 6.7 0.3 6.1 Z" fill="#f2c644"/></svg>
<span class="t" style="left:912.3px;top:347px;font-size:8.45px;color:#2e3035;">Feature 1</span>
<svg class="b" style="left:900.5px;top:357.9px" width="8" height="7" viewBox="0 0 8 7"><path d="M0.3 0.9 Q0.3 0.3 0.9 0.3 H3 L3.8 1.2 H7.1 Q7.7 1.2 7.7 1.8 V6.1 Q7.7 6.7 7.1 6.7 H0.9 Q0.3 6.7 0.3 6.1 Z" fill="#f2c644"/></svg>
<span class="t" style="left:912.3px;top:357px;font-size:8.45px;color:#2e3035;">Feature 2</span>
<svg class="b" style="left:900.5px;top:368.3px" width="8" height="7" viewBox="0 0 8 7"><path d="M0.3 0.9 Q0.3 0.3 0.9 0.3 H3 L3.8 1.2 H7.1 Q7.7 1.2 7.7 1.8 V6.1 Q7.7 6.7 7.1 6.7 H0.9 Q0.3 6.7 0.3 6.1 Z" fill="#f2c644"/></svg>
<span class="t" style="left:912.3px;top:368px;font-size:8.45px;color:#2e3035;">Feature 3</span>
<svg class="b" style="left:900.5px;top:378.8px" width="8" height="7" viewBox="0 0 8 7"><path d="M0.3 0.9 Q0.3 0.3 0.9 0.3 H3 L3.8 1.2 H7.1 Q7.7 1.2 7.7 1.8 V6.1 Q7.7 6.7 7.1 6.7 H0.9 Q0.3 6.7 0.3 6.1 Z" fill="#f2c644"/></svg>
<span class="t" style="left:912.3px;top:378px;font-size:8.45px;color:#2e3035;">Feature 4</span>
<svg class="b" style="left:900.5px;top:389.2px" width="8" height="7" viewBox="0 0 8 7"><path d="M0.3 0.9 Q0.3 0.3 0.9 0.3 H3 L3.8 1.2 H7.1 Q7.7 1.2 7.7 1.8 V6.1 Q7.7 6.7 7.1 6.7 H0.9 Q0.3 6.7 0.3 6.1 Z" fill="#f2c644"/></svg>
<span class="t" style="left:912.3px;top:388px;font-size:8.45px;color:#2e3035;">Feature 5</span>
<svg class="b" style="left:900.5px;top:399.6px" width="8" height="7" viewBox="0 0 8 7"><path d="M0.3 0.9 Q0.3 0.3 0.9 0.3 H3 L3.8 1.2 H7.1 Q7.7 1.2 7.7 1.8 V6.1 Q7.7 6.7 7.1 6.7 H0.9 Q0.3 6.7 0.3 6.1 Z" fill="#f2c644"/></svg>
<svg class="b" style="left:892.3px;top:400.6px" width="5" height="5" viewBox="0 0 5 5"><path d="M4.2 0.8 V4.2 H0.8 Z" fill="#3d4249"/></svg>
<span class="t" style="left:912.3px;top:399px;font-size:8.45px;color:#2e3035;">Administration</span>
<svg class="b" style="left:910.5px;top:410.0px" width="8" height="7" viewBox="0 0 8 7"><path d="M0.3 0.9 Q0.3 0.3 0.9 0.3 H3 L3.8 1.2 H7.1 Q7.7 1.2 7.7 1.8 V6.1 Q7.7 6.7 7.1 6.7 H0.9 Q0.3 6.7 0.3 6.1 Z" fill="#f2c644"/></svg>
<span class="t" style="left:922.3px;top:409px;font-size:8.45px;color:#2e3035;">Projects</span>
<svg class="b" style="left:910.5px;top:420.4px" width="8" height="7" viewBox="0 0 8 7"><path d="M0.3 0.9 Q0.3 0.3 0.9 0.3 H3 L3.8 1.2 H7.1 Q7.7 1.2 7.7 1.8 V6.1 Q7.7 6.7 7.1 6.7 H0.9 Q0.3 6.7 0.3 6.1 Z" fill="#f2c644"/></svg>
<span class="t" style="left:922.3px;top:420px;font-size:8.45px;color:#2e3035;">Settings</span>
<svg class="b" style="left:910.5px;top:430.9px" width="8" height="7" viewBox="0 0 8 7"><path d="M0.3 0.9 Q0.3 0.3 0.9 0.3 H3 L3.8 1.2 H7.1 Q7.7 1.2 7.7 1.8 V6.1 Q7.7 6.7 7.1 6.7 H0.9 Q0.3 6.7 0.3 6.1 Z" fill="#f2c644"/></svg>
<svg class="b" style="left:902.3px;top:431.9px" width="5" height="5" viewBox="0 0 5 5"><path d="M4.2 0.8 V4.2 H0.8 Z" fill="#3f6fb0"/></svg>
<span class="t" style="left:922.3px;top:430px;font-size:8.45px;color:#2e3035;">Users &amp; Roles</span>
<svg class="b" style="left:920.6px;top:441.3px" width="8" height="7" viewBox="0 0 8 7"><path d="M0.3 0.9 Q0.3 0.3 0.9 0.3 H3 L3.8 1.2 H7.1 Q7.7 1.2 7.7 1.8 V6.1 Q7.7 6.7 7.1 6.7 H0.9 Q0.3 6.7 0.3 6.1 Z" fill="#f2c644"/></svg>
<span class="t" style="left:932.4px;top:441px;font-size:8.45px;color:#2e3035;">Permissions</span>
<svg class="b" style="left:920.6px;top:451.7px" width="8" height="7" viewBox="0 0 8 7"><path d="M0.3 0.9 Q0.3 0.3 0.9 0.3 H3 L3.8 1.2 H7.1 Q7.7 1.2 7.7 1.8 V6.1 Q7.7 6.7 7.1 6.7 H0.9 Q0.3 6.7 0.3 6.1 Z" fill="#f2c644"/></svg>
<span class="t" style="left:932.4px;top:451px;font-size:8.45px;color:#2e3035;">Groups</span>
<svg class="b" style="left:900.5px;top:462.1px" width="8" height="7" viewBox="0 0 8 7"><path d="M0.3 0.9 Q0.3 0.3 0.9 0.3 H3 L3.8 1.2 H7.1 Q7.7 1.2 7.7 1.8 V6.1 Q7.7 6.7 7.1 6.7 H0.9 Q0.3 6.7 0.3 6.1 Z" fill="#f2c644"/></svg>
<span class="t" style="left:912.3px;top:461px;font-size:8.45px;color:#2e3035;">Search</span>
<svg class="b" style="left:900.5px;top:472.5px" width="8" height="7" viewBox="0 0 8 7"><path d="M0.3 0.9 Q0.3 0.3 0.9 0.3 H3 L3.8 1.2 H7.1 Q7.7 1.2 7.7 1.8 V6.1 Q7.7 6.7 7.1 6.7 H0.9 Q0.3 6.7 0.3 6.1 Z" fill="#f2c644"/></svg>
<span class="t" style="left:912.3px;top:472px;font-size:8.45px;color:#2e3035;">Help &amp; Documentation</span>
<div class="b" style="left:0.0px;top:634.0px;width:1024.0px;height:1.0px;background:#9aa3b0;"></div>
</body></html>
